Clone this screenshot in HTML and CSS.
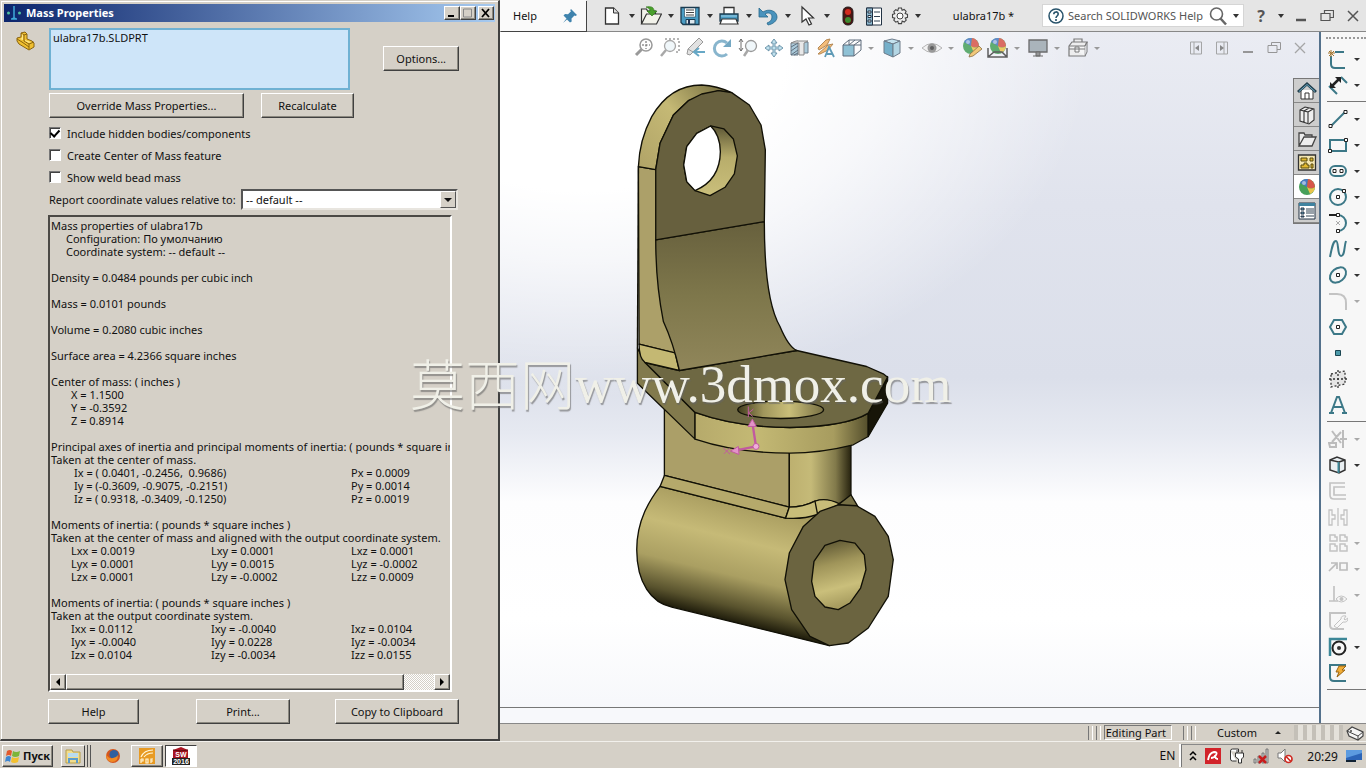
FILE: index.html
```html
<!DOCTYPE html>
<html lang="en">
<head>
<meta charset="utf-8">
<title>SOLIDWORKS - ulabra17b</title>
<link rel="stylesheet" href="styles.css">
</head>
<body>
<div class="desktop">
<section class="dialog" aria-label="Mass Properties">
  <header class="titlebar">
    <svg width="16" height="16" viewBox="0 0 16 16"><path d="M8 1v12M5 14h6M8 13l-2 1M8 13l2 1" stroke="#3fa9d8" stroke-width="1.5" fill="none"/><circle cx="2.500" cy="8" r="1.500" fill="#4fc0a0"/><circle cx="13.500" cy="8" r="1.500" fill="#4fc0a0"/></svg>
    <h1>Mass Properties</h1>
    <div class="winbtns">
      <button aria-label="Minimize"><svg width="12" height="10"><path d="M2 8h6" stroke="#000" stroke-width="2"/></svg></button><button aria-label="Maximize" disabled><svg width="12" height="10"><path d="M1.500 1h8v8h-8z" stroke="#888" fill="none"/></svg></button><button class="gap" aria-label="Close"><svg width="12" height="10"><path d="M2 1l7 8M9 1l-7 8" stroke="#000" stroke-width="1.800"/></svg></button>
    </div>
  </header>
  <div class="dbody">
    <div class="selrow">
      <svg class="part" width="20" height="20" viewBox="0 0 20 20"><path d="M5 2l4-1 2 2v5l5 2 2 2v4l-5 3-10-6-2-3v-3l4-1z" fill="#f0c030" stroke="#8a6410"/><path d="M5 2l3 2v6l5 3v5M1 8l5 3 7 5M13 13l5-2M8 4l3-1" fill="none" stroke="#8a6410"/><path d="M6 3l1 1v5l-3-1 2-1zM9 9l6 2-2 1-4-2z" fill="#ffe88a"/></svg>
      <div class="sellist">ulabra17b.SLDPRT</div>
      <button class="btn opt">Options...</button>
    </div>
    <div class="indent">
      <div class="brow"><button class="btn over">Override Mass Properties...</button><button class="btn recalc">Recalculate</button></div>
      <label class="chk"><input type="checkbox" checked>Include hidden bodies/components</label>
      <label class="chk"><input type="checkbox">Create Center of Mass feature</label>
      <label class="chk"><input type="checkbox">Show weld bead mass</label>
      <div class="report"><label for="cs">Report coordinate values relative to:</label><div class="selwrap"><select id="cs"><option>-- default --</option></select><span class="dd"><i></i></span></div></div>
      <div class="pane">
        <div class="lines">
          <p>Mass properties of ulabra17b</p>
          <p class="i1">Configuration: По умолчанию</p>
          <p class="i1">Coordinate system: -- default --</p>
          <p class="sp">Density = 0.0484 pounds per cubic inch</p>
          <p class="sp">Mass = 0.0101 pounds</p>
          <p class="sp">Volume = 0.2080 cubic inches</p>
          <p class="sp">Surface area = 4.2366 square inches</p>
          <p class="sp">Center of mass: ( inches )</p>
          <p class="i2">X = 1.1500</p>
          <p class="i2">Y = -0.3592</p>
          <p class="i2">Z = 0.8914</p>
          <p class="sp">Principal axes of inertia and principal moments of inertia: ( pounds * square in</p>
          <p>Taken at the center of mass.</p>
          <table class="axes">
            <tr><td>Ix = ( 0.0401, -0.2456,&nbsp; 0.9686)</td><td>Px = 0.0009</td></tr>
            <tr><td>Iy = (-0.3609, -0.9075, -0.2151)</td><td>Py = 0.0014</td></tr>
            <tr><td>Iz = ( 0.9318, -0.3409, -0.1250)</td><td>Pz = 0.0019</td></tr>
          </table>
          <p class="sp">Moments of inertia: ( pounds * square inches )</p>
          <p>Taken at the center of mass and aligned with the output coordinate system.</p>
          <table class="mat">
            <tr><td>Lxx = 0.0019</td><td>Lxy = 0.0001</td><td>Lxz = 0.0001</td></tr>
            <tr><td>Lyx = 0.0001</td><td>Lyy = 0.0015</td><td>Lyz = -0.0002</td></tr>
            <tr><td>Lzx = 0.0001</td><td>Lzy = -0.0002</td><td>Lzz = 0.0009</td></tr>
          </table>
          <p class="sp">Moments of inertia: ( pounds * square inches )</p>
          <p>Taken at the output coordinate system.</p>
          <table class="mat">
            <tr><td>Ixx = 0.0112</td><td>Ixy = -0.0040</td><td>Ixz = 0.0104</td></tr>
            <tr><td>Iyx = -0.0040</td><td>Iyy = 0.0228</td><td>Iyz = -0.0034</td></tr>
            <tr><td>Izx = 0.0104</td><td>Izy = -0.0034</td><td>Izz = 0.0155</td></tr>
          </table>
        </div>
        <div class="hscroll"><button aria-label="Scroll left"><svg width="6" height="8"><path d="M5 0v8L1 4z"/></svg></button><div class="thumb"></div><div class="track"></div><button aria-label="Scroll right"><svg width="6" height="8"><path d="M1 0v8l4-4z"/></svg></button></div>
      </div>
      <div class="foot"><button class="btn help">Help</button><button class="btn print">Print...</button><button class="btn copy">Copy to Clipboard</button></div>
    </div>
  </div>
</section>

<main class="app">
  <header class="menubar">
    <div class="helptab"><a href="#help">Help</a><svg width="16" height="16" viewBox="0 0 16 16"><path d="M9 1l6 6-1.500 1-1-.5-3 3 .2 3L8 14.500 5 11.500 1 15l3.500-4.500L1.500 7.500l1.500-1.500 3 .2 3-3-.8-1z" fill="#3f83ad"/></svg></div>
    <nav class="tools">
      <button aria-label="New"><svg width="22" height="22" viewBox="0 0 22 22"><path d="M4.500 3h8l5 5v11h-13z" fill="#fff" stroke="#333" stroke-width="1.300"/><path d="M12.500 3v5h5" fill="#ddd" stroke="#333"/></svg></button><i class="ar"></i>
      <button aria-label="Open"><svg width="22" height="22" viewBox="0 0 22 22"><path d="M1.500 19V4h5l1 2h8v3M1.500 19l5-10h15l-5 10z" fill="#f2f2ea" stroke="#333" stroke-width="1.200"/><path d="M6 2c5-1 8 0 8 4h3l-5 5-5-5h3c0-2-1-3-4-4z" fill="#4aa02c" stroke="#267010" stroke-width=".6"/></svg></button><i class="ar"></i>
      <button aria-label="Save"><svg width="22" height="22" viewBox="0 0 22 22"><path d="M2 2.500h18v17H4l-2-2z" fill="#4a9cc4" stroke="#1d3c50" stroke-width="1.300"/><path d="M5.500 3h11v9h-11z" fill="#fff" stroke="#1d3c50" stroke-width=".6"/><path d="M7 5h8M7 7.500h8M7 10h8" stroke="#444"/><path d="M7 14.500h9V19H7z" fill="#dde8ee" stroke="#1d3c50"/><path d="M9 15h2v4H9z" fill="#235"/></svg></button><i class="ar"></i>
      <button aria-label="Print"><svg width="22" height="22" viewBox="0 0 22 22"><path d="M6 9V2.500h10V9" fill="#fff" stroke="#333" stroke-width="1.300"/><path d="M2 9h18v7H2z" fill="#4a9cc4" stroke="#1d3c50" stroke-width="1.300"/><path d="M4 14h14l2 5H2z" fill="#fff" stroke="#333" stroke-width="1.200"/><path d="M3 11h16" stroke="#9fd0e6"/></svg></button><i class="ar"></i>
      <button aria-label="Undo"><svg width="22" height="22" viewBox="0 0 22 22"><path d="M2 3v9h9L8 9c3-2 7-1 7 3 0 3-2 5-5 6l1 2c5-1 9-4 9-8 0-6-8-9-14-5z" fill="#4a93bd" stroke="#27688c" stroke-width=".8"/></svg></button><i class="ar"></i>
      <button aria-label="Select"><svg width="22" height="22" viewBox="0 0 22 22"><path d="M6 2v15l4-3 3 6 2.500-1-3-6h5z" fill="#fff" stroke="#333" stroke-width="1.200"/></svg></button><i class="ar"></i>
      <button class="w" aria-label="Rebuild"><svg width="22" height="22" viewBox="0 0 22 22"><rect x="6" y="2" width="10" height="18" rx="4.500" fill="#4a1513" stroke="#222"/><circle cx="11" cy="7" r="3" fill="#d22a1e"/><circle cx="11" cy="15" r="3" fill="#3e8a2f"/></svg></button>
      <button class="w" aria-label="File properties"><svg width="22" height="22" viewBox="0 0 22 22"><path d="M3.500 3h15v17h-15z" fill="#fff" stroke="#234"/><path d="M3.500 3h6v17h-6z" fill="#8fb9cf" stroke="#234"/><path d="M5 6h3v2H5zM5 10.500h3v2H5zM5 15h3v2H5z" fill="#fff" stroke="#234"/><path d="M11 7h6M11 11.500h6M11 16h6" stroke="#345"/></svg></button>
      <button class="w" aria-label="Options"><svg width="22" height="22" viewBox="0 0 22 22"><path d="M9.500 3h3l.6 2.200 2-.8 2 2-1 2 2.400 1v3l-2.300.7 1 2-2 2-2-1-.7 2.500h-3l-.7-2.400-2 1-2-2 1-2.100L3.500 12.500v-3l2.300-.8-1-2 2-2 2 1z" fill="#eee" stroke="#444" stroke-width="1.100"/><circle cx="11" cy="11" r="3" fill="#fff" stroke="#444"/></svg></button><i class="ar tight"></i>
    </nav>
    <span class="doc">ulabra17b *</span>
    <div class="search"><svg width="18" height="18" viewBox="0 0 18 18"><circle cx="9" cy="9" r="7" fill="#fff" stroke="#28536b" stroke-width="1.500"/><path d="M6.800 7.200c0-3 4.400-3 4.400-.2C11.200 9 9 9 9 11M9 12v2" fill="none" stroke="#28536b" stroke-width="1.600"/></svg><input type="text" aria-label="Search" placeholder="Search SOLIDWORKS Help"><svg width="20" height="20" viewBox="0 0 20 20"><circle cx="8.500" cy="8" r="6" fill="none" stroke="#666" stroke-width="1.600"/><path d="M12.500 12.500l5.500 6" stroke="#666" stroke-width="2.500"/></svg><i class="ar tight"></i></div>
    <div class="wincontrols">
      <button aria-label="Help menu" class="q">?</button><i class="ar tight"></i>
      <button class="w" aria-label="Minimize"><svg width="14" height="14"><path d="M2 11h10" stroke="#555" stroke-width="2.500"/></svg></button>
      <button class="w" aria-label="Restore"><svg width="14" height="14"><path d="M4.500 4V1.500h9v7H10M1 4.500h9v7H1z" fill="none" stroke="#555" stroke-width="1.200"/></svg></button>
      <button class="w" aria-label="Close"><svg width="14" height="14"><path d="M2 2l10 10M12 2L2 12" stroke="#555" stroke-width="1.500"/></svg></button>
    </div>
  </header>
  <div class="work">
    <div class="viewport">
      <div class="hud">
        <button class="w" aria-label="Zoom to fit"><svg width="22" height="22" viewBox="0 0 22 22"><circle cx="13" cy="8" r="6" fill="#fff" stroke="#888" stroke-width="1.500"/><path d="M13 4v8M9 8h8" stroke="#444" stroke-dasharray="2 1.500"/><path d="M8.500 12.500L3 18" stroke="#888" stroke-width="3"/></svg></button>
        <button class="w" aria-label="Zoom to area"><svg width="22" height="22" viewBox="0 0 22 22"><path d="M6 2h14v13h-5" fill="none" stroke="#555" stroke-dasharray="2 2"/><circle cx="11" cy="9" r="5.500" fill="#eef6fa" stroke="#999" stroke-width="1.300"/><path d="M7 13l-5 6" stroke="#999" stroke-width="2.500"/></svg></button>
        <button class="w" aria-label="Previous view"><svg width="22" height="22" viewBox="0 0 22 22"><path d="M3 12L14 1l4 4L8 15zM3 12l-1 5 3 1 3-3" fill="#ddd" stroke="#888"/><path d="M10 15h10M14 11l-5 4 5 4" fill="none" stroke="#4d9abd" stroke-width="2"/></svg></button>
        <button class="w" aria-label="Rotate"><svg width="22" height="22" viewBox="0 0 22 22"><path d="M16 6a7.500 7.500 0 1 0 0 11" fill="none" stroke="#74a9c5" stroke-width="3"/><path d="M20 2v8h-8z" fill="#5c99b9"/></svg></button>
        <button class="w" aria-label="Zoom"><svg width="22" height="22" viewBox="0 0 22 22"><path d="M4 2v12M2 5l2-3 2 3M2 11l2 3 2-3" fill="none" stroke="#555"/><circle cx="14" cy="9" r="5.500" fill="#eef6fa" stroke="#888" stroke-width="1.300"/><path d="M11 13l-4 6" stroke="#999" stroke-width="2.500"/></svg></button>
        <button class="w" aria-label="Pan"><svg width="22" height="22" viewBox="0 0 22 22"><path d="M11 2l3 4h-2v4h4V8l4 3-4 3v-2h-4v4h2l-3 4-3-4h2v-4H6v2l-4-3 4-3v2h4V6H8z" fill="#b7dceb" stroke="#4a7c96" stroke-width=".9"/></svg></button>
        <button class="w" aria-label="Section view"><svg width="22" height="22" viewBox="0 0 22 22"><path d="M2 6l7-2v14H2zM15 5h4v11h-4" fill="#9dc3d6" stroke="#567"/><path d="M2 6l5-2h12l-4 2v12h-5V6z" fill="#e6e6e6" stroke="#777"/><path d="M2 10l7-4M2 14l7-5M2 18l7-5M5 18l4-2" stroke="#456"/></svg></button>
        <button class="w" aria-label="Annotations"><svg width="22" height="22" viewBox="0 0 22 22"><path d="M3 11L11 3l4-1-3 6-8 5zM3 17l10-9 5-1-5 6-8 4z" fill="#f3b264" stroke="#a87436"/><path d="M10 20l4-10 5 10M12 17h6" fill="none" stroke="#4389aa" stroke-width="1.800"/></svg></button>
        <button class="w" aria-label="View orientation"><svg width="22" height="22" viewBox="0 0 22 22"><path d="M2 8h11v11H2z" fill="#7db7cf" stroke="#456"/><path d="M2 8l6-5h12L13 8M20 3v10l-7 6M8 3v5M20 8h-7M14 3l-6 5" fill="none" stroke="#456"/></svg></button><i class="ar lt"></i>
        <button class="w" aria-label="Display style"><svg width="22" height="22" viewBox="0 0 22 22"><path d="M3 4l8-2 8 2-7 3z" fill="#bce0ee" stroke="#567"/><path d="M3 4l9 3v13l-9-4z" fill="#5fa4c2" stroke="#567"/><path d="M12 7l7-3v12l-7 4z" fill="#a7d0e1" stroke="#567"/></svg></button><i class="ar lt"></i>
        <button class="w" aria-label="Hide items"><svg width="22" height="22" viewBox="0 0 22 22"><path d="M1 11q10-9 20 0-10 9-20 0z" fill="#f2f2f2" stroke="#aaa"/><circle cx="11" cy="11" r="4.500" fill="#888"/><circle cx="11" cy="11" r="2" fill="#444"/></svg></button><i class="ar lt"></i>
        <button class="w" aria-label="Edit appearance"><svg width="22" height="22" viewBox="0 0 22 22"><g id="ball"><circle cx="10" cy="9" r="8" fill="#47a05a"/><path d="M10 9L3 5a8 8 0 0 1 8-4z" fill="#4779c5"/><path d="M10 9l1-8a8 8 0 0 1 7 8q-4 3-8 0z" fill="#d7564a"/><path d="M10 9q4 3 8 0a8 8 0 0 1-5 7z" fill="#e9c54c"/><circle cx="7" cy="5" r="2" fill="#fff" opacity=".5"/></g><path d="M9 17l9-8 3 3-9 7-4 1z" fill="#f1c163" stroke="#7a5a2a" stroke-width=".8"/></svg></button>
        <button class="w" aria-label="Apply scene"><svg width="22" height="22" viewBox="0 0 22 22"><use href="#ball" transform="translate(1 0)"/><path d="M1 11v9h19v-9M1 20l6-5h8l5 5" fill="none" stroke="#444" stroke-width="1.500"/></svg></button><i class="ar lt"></i>
        <button class="w" aria-label="View settings"><svg width="22" height="22" viewBox="0 0 22 22"><path d="M2 3h18v12H2z" fill="#9faab2" stroke="#555" stroke-width="1.300"/><path d="M9 15h4v4H9zM6 19h10" fill="#888" stroke="#555"/></svg></button><i class="ar lt"></i>
        <button class="w" aria-label="Toolbox"><svg width="22" height="22" viewBox="0 0 22 22"><path d="M7 5V2h8v3M2 9l3-4h15l-2 4v10H2z" fill="#eee" stroke="#666" stroke-width="1.200"/><path d="M2 9h16l2-4v10l-2 4M2 12h16M8 10h4v5H8z" fill="#fff" fill-opacity=".5" stroke="#666"/></svg></button><i class="ar lt"></i>
        <span class="grow"></span>
        <button class="w" aria-label="Collapse left"><svg width="14" height="14"><path d="M1.500 1h11v12h-11zM5 1v12" fill="none" stroke="#999"/><path d="M10 4v6L6 7z" fill="#777"/></svg></button>
        <button class="w" aria-label="Collapse right"><svg width="14" height="14"><path d="M1.500 1h11v12h-11zM9 1v12" fill="none" stroke="#999"/><path d="M5 4v6l4-3z" fill="#777"/></svg></button>
        <button class="w" aria-label="Minimize document"><svg width="14" height="14"><path d="M2 11h10" stroke="#888" stroke-width="2"/></svg></button>
        <button class="w" aria-label="Restore document"><svg width="14" height="14"><path d="M4.500 4V1.500h9v7H10M1 4.500h9v7H1z" fill="none" stroke="#888"/></svg></button>
        <button class="w" aria-label="Close document"><svg width="14" height="14"><path d="M2 2l10 10M12 2L2 12" stroke="#999" stroke-width="1.300"/></svg></button>
      </div>
      <div class="stage">
      <svg class="model" width="270" height="573" viewBox="30 30 810 1720">
        <defs>
          <linearGradient id="rim" gradientUnits="userSpaceOnUse" x1="60" y1="280" x2="330" y2="50"><stop offset="0" stop-color="#b2a568"/><stop offset=".5" stop-color="#c5b975"/><stop offset="1" stop-color="#6f683c"/></linearGradient>
          <linearGradient id="bend" x1="0" y1="0" x2="0" y2="1"><stop offset="0" stop-color="#67603d"/><stop offset=".5" stop-color="#7e774b"/><stop offset="1" stop-color="#90865a"/></linearGradient>
          <linearGradient id="hole" x1="0" y1="0" x2="0" y2="1"><stop offset="0" stop-color="#5c5635"/><stop offset=".45" stop-color="#b8ad6b"/><stop offset="1" stop-color="#cabf7b"/></linearGradient>
          <linearGradient id="front"><stop offset="0" stop-color="#b6aa6b"/><stop offset=".35" stop-color="#c4b974"/><stop offset=".8" stop-color="#a79c5f"/><stop offset="1" stop-color="#544e2c"/></linearGradient>
          <linearGradient id="post"><stop offset="0" stop-color="#bdb06f"/><stop offset=".35" stop-color="#c5ba78"/><stop offset=".75" stop-color="#827a4b"/><stop offset="1" stop-color="#27230f"/></linearGradient>
          <linearGradient id="tube" gradientUnits="userSpaceOnUse" x1="360" y1="1300" x2="275" y2="1650"><stop offset="0" stop-color="#a99d60"/><stop offset=".3" stop-color="#c6ba77"/><stop offset=".6" stop-color="#aa9f62"/><stop offset=".85" stop-color="#58522d"/><stop offset="1" stop-color="#141205"/></linearGradient>
          <linearGradient id="bore" x1="0" y1="0" x2=".2" y2="1"><stop offset="0" stop-color="#514b2c"/><stop offset=".4" stop-color="#a0955a"/><stop offset=".75" stop-color="#cabf7b"/><stop offset="1" stop-color="#a89d60"/></linearGradient>
          <linearGradient id="seat"><stop offset="0" stop-color="#3f3a1d"/><stop offset=".3" stop-color="#a0965c"/><stop offset=".6" stop-color="#c9be79"/><stop offset="1" stop-color="#776f43"/></linearGradient>
        </defs>
        <g stroke="#111006" stroke-width="4" stroke-linejoin="round">
          <path d="M133 1000V1217L508 1312V1140L225 1090z" fill="#ab9f68"/>
          <path d="M508 1140L693 1110V1280L655 1303Q620 1285 585 1294 550 1312 508 1312z" fill="url(#post)"/>
          <path d="M120 1250C90 1290 50 1350 50 1440 50 1540 95 1600 155 1612L628 1728 760 1500 655 1305 497 1345z" fill="url(#tube)"/>
          <path d="M133 1217L508 1312 497 1345 120 1250z" fill="#b5a96b"/>
          <path d="M508 1312Q550 1312 585 1294 620 1282 660 1303L590 1335Q550 1349 497 1345z" fill="#c8bd79"/>
          <path d="M585 1294L593 1335"/>
          <path d="M693 1275L715 1312 655 1305z" fill="#777046"/>
          <path d="M655 1305L710 1308 765 1340 805 1400 820 1470 805 1580 745 1675 685 1720 628 1728 570 1700 515 1620 495 1530 508 1450 550 1370 600 1325z" fill="#6b6440"/>
          <path d="M660 1412L705 1420 733 1455 738 1500 722 1555 690 1600 655 1620 615 1612 585 1580 575 1535 582 1475 615 1427z" fill="url(#bore)"/>
          <path d="M52 835V940L225 1108V1028L75 878z" fill="#827a4d"/>
          <path d="M225 1028Q350 1073 510 1073 680 1070 745 1030V1100L700 1125Q600 1150 510 1150 350 1150 225 1108z" fill="url(#front)"/>
          <path d="M803 920V1000L745 1100V1030z" fill="#171508"/>
          <path d="M75 878L178 902 530 842 740 890 790 912 803 922 745 1030Q680 1070 510 1073 350 1073 225 1028z" fill="#6e6843"/>
          <ellipse cx="482" cy="1020" rx="129" ry="26" fill="url(#seat)"/>
          <path d="M55 290L107 299H125V560L150 755 165 850 57 823z" fill="#aca069"/>
          <path d="M57 823L165 849 178 902 75 878Q57 865 57 823z" fill="#c4b873"/>
          <path d="M107 510L433 455Q433 690 480 770 505 830 530 842L178 902Q160 820 130 755 107 640 107 510z" fill="url(#bend)"/>
          <path d="M55 290Q58 210 95 140 150 45 245 45 290 47 335 68L295 62 205 92 160 135 120 220 107 299z" fill="url(#rim)"/>
          <path d="M107 510V298L120 220 160 135 205 92 245 72 295 62 335 68 388 105 423 165 436 240 433 455z" fill="#67603e"/>
          <path d="M272 168L312 177 340 207 352 258 343 312 315 352 270 377 225 362 200 335 191 285 200 230 230 190z" fill="url(#hole)"/>
          <path d="M272 168Q300 195 301 245 300 330 225 362L200 335 191 285 200 230 230 190z" fill="#fff"/>
          <path d="M55 290L52 835" fill="none"/>
        </g>
        <g stroke="#c25aa0" stroke-width="7" fill="none"><path d="M408 1130L397 1058M408 1130L340 1143"/><path d="M310 1135l20 18M312 1152l16-16M385 1010v32M385 1030l15-12M385 1028l13 12" stroke-width="3"/><path d="M384 1070l13-22 12 22zM355 1130l-24 14 26 10z" fill="#e293c8" stroke-width="3"/><circle cx="408" cy="1130" r="9" fill="#efb0da" stroke-width="3"/></g>
      </svg>
      </div>
      <nav class="tabs">
        <button aria-label="Home"><svg width="20" height="20" viewBox="0 0 20 20"><path d="M4 9v9h12V9" fill="#fff" stroke="#333"/><path d="M8 18v-6h4v6" fill="none" stroke="#333"/><path d="M1 11l9-8 9 8" fill="none" stroke="#24404e" stroke-width="3"/><path d="M2 10.500l8-7 8 7" fill="none" stroke="#6aa9c2"/></svg></button>
        <button aria-label="Design library"><svg width="20" height="20" viewBox="0 0 20 20"><path d="M3 5l5-3 9 2v11l-5 4-9-3zM3 5l4 1v11M7 6l5-3M7 6l4 1v11M11 7l5-3" fill="#eee" stroke="#333" stroke-width="1.100"/></svg></button>
        <button aria-label="File explorer"><svg width="20" height="20" viewBox="0 0 20 20"><path d="M2 17V4h5l1 2h7v2M2 17L7 8h12l-4 9z" fill="#eee" stroke="#444" stroke-width="1.300"/></svg></button>
        <button aria-label="View palette"><svg width="20" height="20" viewBox="0 0 20 20"><path d="M1.500 2h17v15h-17z" fill="#f4e6b0" stroke="#333" stroke-width="1.300"/><path d="M4 5h6v3H4zM13 5h3v3h-3zM7 10h3v2h2v3H4v-3h3zM14 11h2v4h-2z" fill="#e3b92f" stroke="#54480f"/></svg></button>
        <button class="on" aria-label="Appearances"><svg width="20" height="20" viewBox="0 0 20 20"><use href="#ball" transform="translate(0 1)"/></svg></button>
        <button aria-label="Custom properties"><svg width="20" height="20" viewBox="0 0 20 20"><path d="M2 2h16v16H2z" fill="#fff" stroke="#234"/><path d="M2 3.500h16" stroke="#3f83a0" stroke-width="3"/><path d="M4 7h3v2H4zM4 11h3v2H4zM4 15h3v1H4z" fill="#6aa9c2" stroke="#234"/><path d="M9 8h8M9 10h8M9 12h8M9 15h8" stroke="#345"/></svg></button>
      </nav>
      <div class="motion"></div>
    </div>
    <aside class="sketch">
      <div class="grip"></div>
      <div class="r"><button aria-label="Sketch"><svg width="20" height="20" viewBox="0 0 20 20"><path d="M7 3h9M3 7v8q0 4 4 4h10" fill="none" stroke="#3c7887" stroke-width="2"/><path d="M3 1v7M0 4h7M1 2l5 5M6 2L1 7" stroke="#a4752c"/></svg></button><i class="ar"></i></div>
      <div class="r"><button aria-label="Smart dimension"><svg width="20" height="20" viewBox="0 0 20 20"><path d="M1 11l8 8M13 2l6 6" stroke="#3c7887" stroke-width="2"/><path d="M4 11l7-7" stroke="#222" stroke-width="2.500"/><path d="M2 13V7l6 6zM13 2v6L7 2z" fill="#222"/></svg></button><i class="ar"></i></div>
      <hr>
      <div class="r"><button aria-label="Line"><svg width="20" height="20" viewBox="0 0 20 20"><path d="M3 17L17 3" stroke="#3c7887" stroke-width="2"/><path d="M1 15.500h3v3H1zM16 1.500h3v3h-3z" fill="#fff" stroke="#222"/></svg></button><i class="ar"></i></div>
      <div class="r"><button aria-label="Rectangle"><svg width="20" height="20" viewBox="0 0 20 20"><path d="M2 5h16v11H2z" fill="none" stroke="#3c7887" stroke-width="2"/><path d="M.5 14.500h3v3h-3zM16.500 3.500h3v3h-3z" fill="#fff" stroke="#222"/></svg></button><i class="ar"></i></div>
      <div class="r"><button aria-label="Slot"><svg width="20" height="20" viewBox="0 0 20 20"><rect x="2" y="5" width="16" height="10" rx="5" fill="none" stroke="#3c7887" stroke-width="2"/><path d="M5 8.500h3v3H5zM12 8.500h3v3h-3z" fill="#fff" stroke="#222"/></svg></button><i class="ar"></i></div>
      <div class="r"><button aria-label="Circle"><svg width="20" height="20" viewBox="0 0 20 20"><circle cx="10" cy="10" r="8" fill="none" stroke="#3c7887" stroke-width="2"/><path d="M8.500 8.500h3v3h-3zM14.500 2.500h3v3h-3z" fill="#fff" stroke="#222"/></svg></button><i class="ar"></i></div>
      <div class="r"><button aria-label="Arc"><svg width="20" height="20" viewBox="0 0 20 20"><path d="M10 2a8 8 0 0 1 0 16" fill="none" stroke="#3c7887" stroke-width="2"/><path d="M1 2h8" stroke="#222" stroke-width="2"/><path d="M8 8l4 4M12 8l-4 4" stroke="#aaa"/><path d="M8.500.5h3v3h-3zM8.500 16.500h3v3h-3z" fill="#fff" stroke="#222"/></svg></button><i class="ar"></i></div>
      <div class="r"><button aria-label="Spline"><svg width="20" height="20" viewBox="0 0 20 20"><path d="M2 18C4 8 5 2 8 2s1 15 5 15 3-10 5-15" fill="none" stroke="#3c7887" stroke-width="2"/></svg></button><i class="ar"></i></div>
      <div class="r"><button aria-label="Ellipse"><svg width="20" height="20" viewBox="0 0 20 20"><ellipse cx="10" cy="10" rx="9" ry="6.500" transform="rotate(-40 10 10)" fill="none" stroke="#3c7887" stroke-width="2"/><path d="M8.500 8.500h3v3h-3z" fill="#fff" stroke="#222"/></svg></button><i class="ar"></i></div>
      <div class="r off"><button aria-label="Fillet"><svg width="20" height="20" viewBox="0 0 20 20"><path d="M1 3h8q9 0 9 9v7" fill="none" stroke="#777" stroke-width="2"/></svg></button><i class="ar"></i></div>
      <div class="r"><button aria-label="Polygon"><svg width="20" height="20" viewBox="0 0 20 20"><path d="M6 3h8l4 7-4 7H6l-4-7z" fill="none" stroke="#3c7887" stroke-width="2"/><path d="M8.500 8.500h3v3h-3z" fill="#fff" stroke="#222"/></svg></button></div>
      <div class="r"><button aria-label="Point"><svg width="20" height="20" viewBox="0 0 20 20"><path d="M7.500 7.500h5v5h-5z" fill="#4c9aaa" stroke="#1b4652"/></svg></button></div>
      <div class="r"><button aria-label="Plane"><svg width="20" height="20" viewBox="0 0 20 20"><path d="M3 5l14-3v13L3 18zM10 1v18M1 10h18" fill="#ddd" fill-opacity=".7" stroke="#333" stroke-dasharray="2 2" stroke-width="1.300"/></svg></button></div>
      <div class="r"><button aria-label="Sketch text"><svg width="20" height="20" viewBox="0 0 20 20"><path d="M3 18L9 2h2l6 16M6 12h8M1 18h5M14 18h5" fill="none" stroke="#3c7887" stroke-width="2"/></svg></button></div>
      <hr>
      <div class="r off"><button aria-label="Trim"><svg width="20" height="20" viewBox="0 0 20 20"><path d="M4 2l9 12M13 3L4 13M1 14h7v4H2zM15 1v18M12 10h7" fill="none" stroke="#666" stroke-width="2"/></svg></button><i class="ar"></i></div>
      <div class="r"><button aria-label="Convert entities"><svg width="20" height="20" viewBox="0 0 20 20"><path d="M2 5l7-3 8 3v10l-6 3-9-3zM2 5l9 2v11M11 7l6-2" fill="#e9eff2" stroke="#333" stroke-width="1.500"/><path d="M10.500 7v11" stroke="#3c8797" stroke-width="2"/></svg></button><i class="ar"></i></div>
      <div class="r off"><button aria-label="Offset"><svg width="20" height="20" viewBox="0 0 20 20"><path d="M17 2H2v12q0 4 4 4h12M17 6H6v8h12" fill="none" stroke="#777" stroke-width="1.700"/></svg></button></div>
      <div class="r off"><button aria-label="Mirror"><svg width="20" height="20" viewBox="0 0 20 20"><path d="M10 1v18M1 3h3v5h3v4H4v6H1zM19 3h-3v5h-3v4h3v6h3z" fill="none" stroke="#777" stroke-width="1.300"/></svg></button></div>
      <div class="r off"><button aria-label="Pattern"><svg width="20" height="20" viewBox="0 0 20 20"><path d="M2 2h5v2h2v4H2zM12 2h5v2h2v4h-7zM2 11h5v2h2v5H2zM12 11h5v2h2v5h-7z" fill="none" stroke="#777" stroke-width="1.500"/></svg></button><i class="ar"></i></div>
      <div class="r off"><button aria-label="Move"><svg width="20" height="20" viewBox="0 0 20 20"><path d="M1 12l7-7M3 4h6v6M12 4h7v7h-7z" fill="none" stroke="#666" stroke-width="1.700"/></svg></button><i class="ar"></i></div>
      <div class="r off"><button aria-label="Relations"><svg width="20" height="20" viewBox="0 0 20 20"><path d="M6 1v15M1 16h9" stroke="#777" stroke-width="1.700"/><path d="M8 14q5-6 11 0-6 6-11 0z" fill="none" stroke="#777"/><circle cx="13.500" cy="14" r="2" fill="#777"/></svg></button><i class="ar"></i></div>
      <div class="r off"><button aria-label="Repair"><svg width="20" height="20" viewBox="0 0 20 20"><path d="M18 2H2v12q0 4 4 4h10" fill="none" stroke="#777" stroke-width="2"/><path d="M6 15l7-7q0-4 5-3l-2 3 1 1 3-2q0 5-5 4l-6 6z" fill="none" stroke="#777"/></svg></button></div>
      <div class="r"><button aria-label="Quick snaps"><svg width="20" height="20" viewBox="0 0 20 20"><path d="M2 19V2h17" fill="none" stroke="#3c8797" stroke-width="2.500"/><circle cx="11" cy="11" r="6.500" fill="none" stroke="#222" stroke-width="2"/><circle cx="11" cy="11" r="2" fill="#333"/></svg></button><i class="ar"></i></div>
      <div class="r"><button aria-label="Rapid sketch"><svg width="20" height="20" viewBox="0 0 20 20"><path d="M18 2H2v12q0 4 4 4h12" fill="none" stroke="#3c7887" stroke-width="2"/><path d="M11 3h7l-4 4h3l-8 7 2-5H8z" fill="#f2ad35" stroke="#9a6514"/></svg></button></div>
      <hr>
    </aside>
  </div>
  <footer class="status"><span class="groove"></span><span class="groove"></span><span class="field">Editing Part</span><span class="groove"></span><span class="groove"></span><button class="units">Custom <i class="up"></i></button><span class="ribs"></span><svg width="18" height="16" viewBox="0 0 18 16"><path d="M1 6l5-4 11 5v4l-5 4-9-4z" fill="#f5f5f5" stroke="#444" stroke-width="1.200"/><path d="M1 6l11 5 5-4M12 11v4" fill="none" stroke="#444"/><circle cx="5" cy="6" r="1" fill="#444"/></svg></footer>
</main>
</div>

<footer class="taskbar">
  <button class="start"><svg width="16" height="16" viewBox="0 0 16 16"><path d="M2 3q3-2 5 0L6 8Q4 6 1 8z" fill="#e2592c"/><path d="M8 3q3 2 7 0l-1 5q-4 2-7 0z" fill="#7cb53a"/><path d="M1 9q3-2 5 0l-1 5Q3 12 0 14z" fill="#3d86d2"/><path d="M7 9q3 2 7 0l-1 5q-4 2-7 0z" fill="#f3c02f"/></svg>Пуск</button>
  <button class="task folder" aria-label="Explorer"><svg width="18" height="18" viewBox="0 0 18 18"><path d="M2 3h6l1 2h7v11H2z" fill="#f2dd8c" stroke="#b79d48"/><path d="M4 6h10v4H4z" fill="#b9dcf0"/><path d="M5 16v-4h8v4" fill="none" stroke="#5b9ccc" stroke-width="2"/></svg></button>
  <a class="fox" href="#firefox" aria-label="Firefox"><svg width="16" height="16" viewBox="0 0 16 16"><circle cx="8" cy="8" r="7" fill="#d4561e"/><circle cx="9" cy="6.500" r="4.500" fill="#2f5f9f"/><path d="M1 6q2 5 7 4 3 0 5-3 0 7-6 7Q1 13 1 6z" fill="#f08a24"/></svg></a>
  <button class="task" aria-label="PDF"><svg width="18" height="18" viewBox="0 0 18 18"><path d="M1 1h16v16H1z" fill="#e89a22"/><path d="M3 10Q6 3 15 3M6 10q3-4 9-4M3 12v4M3 12h2v2H3M8 12v4h2v-4zM13 16v-4h2M13 14h2" fill="none" stroke="#fff6d8" stroke-width="1.200"/></svg></button>
  <button class="task active" aria-label="SOLIDWORKS 2016"><svg width="20" height="20" viewBox="0 0 20 20"><path d="M2 4l8-3 7 3v8H2z" fill="#a91422"/><path d="M2 4l7 1v7M9 5l8-1" stroke="#5e0a10" fill="none"/><path d="M1 12h18v7H1z" fill="#222"/><text x="10" y="18" text-anchor="middle" class="yr">2016</text><text x="10" y="11" text-anchor="middle" class="yr">SW</text></svg></button>
  <span class="grow"></span>
  <span class="lang">EN</span>
  <div class="tray">
    <svg width="8" height="12" viewBox="0 0 8 12"><path d="M1 5l3-3 3 3M1 10l3-3 3 3" fill="none" stroke="#000" stroke-width="1.500"/></svg>
    <svg width="16" height="16" viewBox="0 0 16 16"><path d="M0 0h16v16H0z" fill="#d2232a"/><path d="M3 12q1-7 6-8 4 0 2 3t-5 3M10 7q0 4 3 4" fill="none" stroke="#fff" stroke-width="1.800"/></svg>
    <svg width="16" height="16" viewBox="0 0 16 16"><path d="M1.500 3q0-2 2-2h6v3M1.500 3v8q0 2 2 2h4" fill="#fff" stroke="#333"/><path d="M6.500 5h8v4l-2 2v4h-3v-4l-3-2zM8 2v3M13 2v3" fill="#fff" stroke="#333"/></svg>
    <svg width="16" height="16" viewBox="0 0 16 16"><path d="M1 11h2v4H1zM5 8h2v7H5zM9 5h2v10H9zM13 1h2v14h-2z" fill="#ccc" stroke="#666" stroke-width=".8"/><path d="M6 8l7 7M13 8l-7 7" stroke="#c81c1c" stroke-width="2.500"/></svg>
    <svg width="16" height="16" viewBox="0 0 16 16"><path d="M1 5h3l4-4v13l-4-4H1z" fill="#fff" stroke="#777"/><circle cx="11.500" cy="11" r="3.500" fill="#fff" stroke="#cf2a22" stroke-width="1.700"/><path d="M9 8.500l5 5" stroke="#cf2a22" stroke-width="1.700"/></svg>
    <time>20:29</time>
    <svg width="16" height="14" viewBox="0 0 16 14"><path d="M0 1h16v10H0z" fill="#2c65b8"/><path d="M0 1h16v3L0 9z" fill="#5c9be0"/><path d="M0 12h10" stroke="#123" stroke-width="2"/></svg>
  </div>
</footer>
<div class="mark"><span class="cjk">莫西网</span><span>www.3dmox.com</span></div>
<script src="app.js"></script>
</body>
</html>
```
FILE: styles.css
```css
* { box-sizing: border-box; }
body {
  margin: 0; height: 100vh; display: flex; flex-direction: column; position: relative; overflow: hidden;
  font: 11px/13px "Noto Sans", "DejaVu Sans Condensed", sans-serif; color: #111; background: #d5d0c7;
}
button { font: inherit; color: inherit; padding: 0; border: 0; background: none; display: flex; align-items: center; justify-content: center; }
svg { display: block; flex: none; }
p, h1, hr { margin: 0; }
a { color: inherit; text-decoration: none; }
.grow { flex: 1; }
.desktop { flex: 1; min-height: 0; display: flex; }

/* dialog */
.dialog { width: 500px; flex: none; border: 1px solid #d5d0c7; border-right: 2px solid #404040; border-bottom: 2px solid #404040; box-shadow: inset 1px 1px #fff; padding: 3px 3px 0; }
.titlebar { height: 18px; display: flex; align-items: center; gap: 4px; padding: 0 1px 0 2px; background: linear-gradient(90deg, #0c256c, #a6caf0); color: #fff; }
.titlebar h1 { font-size: 11px; line-height: 14px; font-weight: bold; flex: 1; }
.winbtns { display: flex; }
.winbtns button { width: 16px; height: 14px; }
.winbtns .gap { margin-left: 2px; }
.winbtns button, .btn, .hscroll button, .thumb, .start, .task {
  background: #d5d0c7; border: 1px solid; border-color: #fff #404040 #404040 #fff; box-shadow: inset -1px -1px #8b887f;
}
.dbody { padding: 6px 36px 0 12px; }
.selrow { display: flex; align-items: flex-start; }
.part { margin-top: 3px; }
.sellist { width: 303px; height: 62px; margin-left: 13px; background: #cee5f9; border: 2px solid #6fb1d3; padding: 1px 2px; }
.opt { width: 76px; height: 25px; margin: 18px 0 0 33px; }
.indent { padding-left: 32px; }
.brow { display: flex; gap: 17px; margin: 3px 0 4px 1px; }
.btn { height: 25px; }
.over { width: 195px; }
.recalc { width: 93px; }
.chk { display: flex; align-items: center; gap: 6px; height: 22px; padding-left: 1px; }
.chk input { appearance: none; width: 12px; height: 12px; margin: 0; background: #fff; border: 1px solid; border-color: #777 #fff #fff #777; box-shadow: inset 1px 1px #404040; display: grid; place-items: center; }
.chk input:checked::after { content: ""; width: 4px; height: 7px; border: solid #000; border-width: 0 2px 2px 0; transform: rotate(42deg); margin-bottom: 2px; }
.report { display: flex; align-items: center; justify-content: space-between; padding-left: 1px; margin: 1px 1px 0 0; height: 21px; }
.selwrap { display: flex; width: 217px; height: 21px; background: #fff; border: 2px solid; border-color: #555 #e8e5df #e8e5df #555; }
.selwrap select { flex: 1; appearance: none; border: 0; background: none; font: inherit; padding: 0 3px; color: inherit; }
.dd { width: 16px; background: #d5d0c7; border: 1px solid; border-color: #fff #555 #555 #fff; display: grid; place-items: center; }
.dd i { border: 4px solid transparent; border-top-color: #111; border-bottom: 0; }
.pane { width: 404px; margin-top: 5px; border: 2px solid; border-color: #4c4a46 #fff #fff #4c4a46; }
.lines { height: 457px; padding: 2px 0 0 1px; overflow: hidden; white-space: nowrap; }
.lines .i1 { padding-left: 15px; }
.lines .i2 { padding-left: 20px; }
.lines .sp { margin-top: 13px; }
table { border-collapse: collapse; table-layout: fixed; }
td { padding: 0; height: 13px; }
.mat { width: 420px; margin-left: 20px; }
.axes { width: 397px; margin-left: 23px; }
.axes td:first-child { width: 277px; }
.hscroll { display: flex; height: 16px; }
.hscroll button { width: 16px; }
.thumb { flex: 1; }
.track { width: 30px; background: repeating-conic-gradient(#fff 0 25%, #d5d0c7 0 50%) 0 0 / 2px 2px; }
.foot { display: flex; justify-content: space-between; margin: 7px 0 0 0; }
.help { width: 91px; }
.print { width: 94px; margin-left: 34px; }
.copy { width: 124px; margin-left: 22px; }

/* application window */
.app { flex: 1; min-width: 0; display: flex; flex-direction: column; }
.menubar { height: 32px; display: flex; align-items: center; background: #e5e5e5; border-bottom: 1px solid #888; }
.helptab { width: 86px; height: 31px; background: #fafafa; display: flex; align-items: center; justify-content: space-between; padding: 0 8px 0 13px; box-shadow: 1px 1px #444; }
.tools { display: flex; align-items: center; padding-left: 15px; }
.tools button { width: 22px; }
.ar { display: block; width: 6px; margin: 0 5px 0 6px; border: solid transparent; border-width: 4px 3px 0; border-top-color: #333; }
.ar.tight { margin: 0 4px 0 2px; }
.ar.lt { border-top-color: #999; margin: 0 5px 0 3px; border-width: 3px 3px 0; }
.w, .tools .w { width: 26px; }
.doc { margin: 0 auto; }
.search { width: 202px; height: 23px; background: #fff; border: 1px solid #d5d5d5; display: flex; align-items: center; gap: 3px; padding-left: 4px; }
.search input { flex: 1; min-width: 0; border: 0; padding: 0; font: inherit; background: none; }
.search input::placeholder { color: #555; opacity: 1; }
.wincontrols { display: flex; align-items: center; padding-left: 7px; }
.q { width: 20px; font: bold 16px/18px "Noto Sans", sans-serif; color: #555; }
.wincontrols .ar { margin: 0 4px 0 7px; }
.work { flex: 1; min-height: 0; display: flex; }
.viewport {
  flex: 1; min-width: 0; position: relative; display: flex; flex-direction: column;
  background: radial-gradient(ellipse 62% 50% at 10% 3%, #fff 40%, #fffb 60%, #fff0 100%),
    linear-gradient(#eaecf3, #e0e3ed 25%, #dbdfea 50%, #e6e9f1 58%, #fdfdfe 68%, #fff 85%, #f5f6fa);
}
.hud { display: flex; align-items: center; height: 32px; padding: 0 6px 0 131px; }
.hud svg { opacity: .85; }
.stage { flex: 1; min-height: 0; padding: 16px 0 0 130px; overflow: hidden; }
.motion { height: 16px; border-top: 1px solid #777; background: #f7f8fb; }
.tabs { position: absolute; right: 0; top: 46px; width: 26px; background: #cdcdcd; border: 1px solid #777; border-right: 0; }
.tabs button { width: 25px; height: 24px; border-bottom: 1px solid #888; }
.tabs .on { background: #fff; }
.sketch { width: 47px; background: #f7f7f7; border-left: 2px solid #54718c; }
.grip { height: 8px; margin: 5px 0 1px 5px; border-top: 2px dotted #999; }
.sketch .r { display: flex; align-items: center; height: 26px; padding-left: 7px; }
.off { opacity: .4; }
.sketch .ar { margin: 0 0 0 6px; border-width: 3px 3px 0; }
.sketch hr { border: 0; border-top: 1px solid #777; margin: 3px 0 4px 6px; }
.status { height: 18px; display: flex; align-items: center; justify-content: flex-end; gap: 3px; border-top: 1px solid #888; padding-right: 2px; }
.groove { width: 5px; height: 14px; border-left: 1px solid #777; border-right: 1px solid #fff; }
.field { padding: 0 5px 0 1px; height: 15px; border: 1px solid; border-color: #777 #fff #fff #777; margin-right: 8px; }
.units { width: 84px; gap: 18px; margin-left: 8px; }
.up { border: 3px solid transparent; border-bottom-color: #222; border-top: 0; }
.ribs { width: 49px; height: 15px; background: repeating-linear-gradient(90deg, #c4c0b8 0 4px, #e4e1da 4px 9px); }

/* taskbar */
.taskbar { height: 27px; display: flex; align-items: center; border-top: 1px solid #f2f0ec; padding: 1px 0 0 2px; }
.start { width: 51px; height: 22px; font-weight: bold; gap: 2px; }
.task { width: 32px; height: 22px; }
.folder { width: 24px; margin: 0 8px 0 8px; position: relative; box-shadow: 2px 0 #d5d0c7, 3px 0 #555, 5px 0 #d5d0c7, 6px 0 #555; }
.fox { padding: 0 10px 0 12px; }
.task.active { margin-left: 2px; background: #fff; border-color: #404040 #fff #fff #404040; box-shadow: none; }
.yr { font: bold 7px "Liberation Sans", sans-serif; fill: #fff; }
.lang { font-size: 12px; padding-right: 6px; }
.tray { display: flex; align-items: center; gap: 8px; height: 23px; border-left: 1px solid #777; border-top: 1px solid #888; box-shadow: -2px 0 #fff; padding: 0 4px 0 7px; }
.tray time { margin-left: 6px; font-size: 12px; }

/* overlay caption across both windows */
.mark { position: absolute; left: 410px; top: 353px; display: flex; align-items: flex-start; white-space: nowrap; font: 53px/62px "Liberation Serif", serif; color: #f0f0e8; text-shadow: 1px 2px 1px #6669; pointer-events: none; }
.cjk { font: 300 55px/56px "Noto Sans CJK SC", sans-serif; }
```
FILE: app.js
```js
document.querySelectorAll('.tabs button').forEach(function (tab, i, all) {
  tab.addEventListener('click', function () {
    all.forEach(function (t) { t.classList.toggle('on', t === tab); });
  });
});
```
